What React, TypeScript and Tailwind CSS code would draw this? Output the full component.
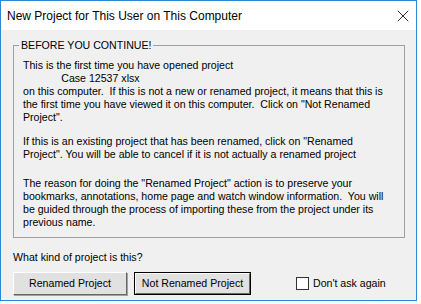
import { X } from "lucide-react";

const body = "font-['Liberation_Sans',Arial,sans-serif] text-[10.6px] leading-[13px] text-black whitespace-pre";

const para1 = [
  "This is the first time you have opened project",
  "             Case 12537 xlsx",
  "on this computer.  If this is not a new or renamed project, it means that this is",
  "the first time you have viewed it on this computer.  Click on \"Not Renamed",
  "Project\".",
];

const para2 = [
  "If this is an existing project that has been renamed, click on \"Renamed",
  "Project\". You will be able to cancel if it is not actually a renamed project",
];

const para3 = [
  "The reason for doing the \"Renamed Project\" action is to preserve your",
  "bookmarks, annotations, home page and watch window information.  You will",
  "be guided through the process of importing these from the project under its",
  "previous name.",
];

function Lines({ lines }: { lines: string[] }) {
  return (
    <div>
      {lines.map((l, i) => (
        <div key={i} className="h-[13px]">
          {l}
        </div>
      ))}
    </div>
  );
}

export default function App() {
  return (
    <div className="w-[421px] h-[304px] bg-white">
      <div className="w-[417px] h-[301px] border border-[#2b87d8] flex flex-col">
        <div className="h-[29px] bg-white flex items-center justify-between pl-[6px] pr-[3px]">
          <span className="font-['Liberation_Sans',Arial,sans-serif] text-[12px] text-black">
            New Project for This User on This Computer
          </span>
          <X className="w-[20px] h-[20px] text-black" strokeWidth={1} />
        </div>
        <div className={`flex-1 bg-[#f0f0f0] pl-[12px] pr-[11px] pt-[9px] ${body}`}>
          <fieldset className="border border-[#a0a0a0] h-[199px] pl-[9px] pr-[4px] pt-[7px]">
            <legend className="ml-[-4px] px-[2px]">BEFORE YOU CONTINUE!</legend>
            <Lines lines={para1} />
            <div className="mt-[11px]">
              <Lines lines={para2} />
            </div>
            <div className="mt-[16px]">
              <Lines lines={para3} />
            </div>
          </fieldset>
          <div className="mt-[13px] h-[13px]">What kind of project is this?</div>
          <div className="mt-[8px] flex items-center">
            <button className="w-[114px] h-[23px] bg-[#e1e1e1] border border-t-white border-l-white border-b-[#696969] border-r-[#696969] shadow-[1px_1px_0_#a0a0a0]">
              Renamed Project
            </button>
            <button className="ml-[7px] w-[117px] h-[23px] bg-[#e1e1e1] border border-black flex items-center justify-center">
              <span className="w-full h-full flex items-center justify-center border border-t-white border-l-white border-b-[#696969] border-r-[#696969]">
                Not Renamed Project
              </span>
            </button>
            <label className="ml-[45px] flex items-center">
              <span className="w-[13px] h-[13px] bg-white border border-[#333]" />
              <span className="ml-[4px]">Don't ask again</span>
            </label>
          </div>
        </div>
      </div>
    </div>
  );
}
